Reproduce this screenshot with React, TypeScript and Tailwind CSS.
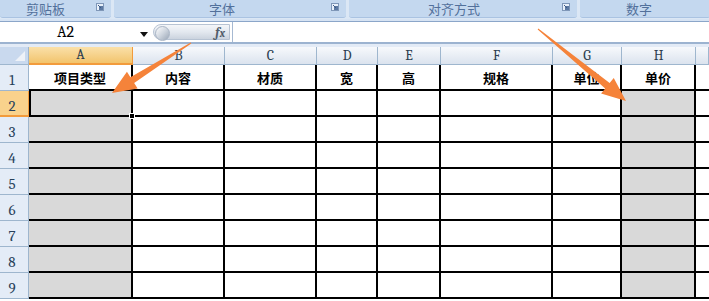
import React from "react";

const cols = [
  { key: "A", w: 104, title: "项目类型", gray: true },
  { key: "B", w: 92, title: "内容" },
  { key: "C", w: 92, title: "材质" },
  { key: "D", w: 61, title: "宽" },
  { key: "E", w: 63, title: "高" },
  { key: "F", w: 112, title: "规格" },
  { key: "G", w: 69, title: "单位" },
  { key: "H", w: 74, title: "单价", gray: true },
  { key: "I", w: 13, title: "" },
];

const groups = [
  { label: "剪贴板", w: 111, pr: "pr-[20px]", launcher: true },
  { label: "字体", w: 232, pr: "pr-[16px]", launcher: true },
  { label: "对齐方式", w: 228, pr: "pr-[18px]", launcher: true },
  { label: "数字", w: 130, pr: "pr-[12px]", launcher: false },
];

function Launcher() {
  return (
    <svg width="8" height="8" viewBox="0 0 8 8" className="absolute right-[7px] top-[3px]">
      <rect x="0.5" y="0.5" width="7" height="7" fill="#e8f0fa" stroke="#7f97b8" />
      <rect x="3" y="3" width="4" height="4" fill="#5d7aa3" />
      <path d="M2 2 L5 5" stroke="#3d5a85" strokeWidth="1" />
    </svg>
  );
}

// tapered arrow from tail to tip
function Arrow({ x1, y1, x2, y2 }: { x1: number; y1: number; x2: number; y2: number }) {
  const dx = x2 - x1;
  const dy = y2 - y1;
  const len = Math.hypot(dx, dy);
  const ux = dx / len;
  const uy = dy / len;
  const nx = -uy;
  const ny = ux;
  const head = 24;
  const hw = 10;
  const bx = x2 - ux * head;
  const by = y2 - uy * head;
  const pts = [
    [x1 + nx * 0.5, y1 + ny * 0.5],
    [bx + nx * 3.5, by + ny * 3.5],
    [bx + nx * hw, by + ny * hw],
    [x2, y2],
    [bx - nx * hw, by - ny * hw],
    [bx - nx * 3.5, by - ny * 3.5],
    [x1 - nx * 0.5, y1 - ny * 0.5],
  ]
    .map((p) => p.join(","))
    .join(" ");
  return <polygon points={pts} fill="#f5833a" />;
}

export default function App() {
  const rows = [1, 2, 3, 4, 5, 6, 7, 8, 9];
  const template =
    "grid grid-cols-[29px_104px_92px_92px_61px_63px_112px_69px_74px_1fr]";

  return (
    <div className="relative w-[709px] h-[301px] overflow-hidden bg-white font-[Noto_Sans_CJK_SC]">
      {/* ribbon group labels */}
      <div className="flex h-[19px] gap-[3px] bg-[#dbe7f5]">
        {groups.map((g) => (
          <div
            key={g.label}
            style={{ width: g.w }}
            className={`relative shrink-0 flex items-center justify-center ${g.pr} h-[18px] bg-[#c4d8ef] rounded-b-[3px] border-b border-[#aac3e2] text-[13px] leading-none text-[#52709b]`}
          >
            {g.label}
            {g.launcher && <Launcher />}
          </div>
        ))}
      </div>
      <div className="h-[3px] bg-[#d6e3f3] border-b border-[#8ba6c9]" />

      {/* formula bar */}
      <div className="flex h-[22px] bg-white border-b-2 border-[#9cb3d0]">
        <div className="relative w-[153px] shrink-0 flex items-center justify-center pr-[22px] font-serif text-[16px] text-black">
          A2
          <svg width="8" height="5" viewBox="0 0 8 5" className="absolute left-[140px] top-[10px]">
            <path d="M0 0 H8 L4 5 Z" fill="#111" />
          </svg>
        </div>
        <div className="relative w-[77px] shrink-0 my-[2px] rounded-l-full bg-gradient-to-b from-[#f4f6f9] via-[#e3e8ef] to-[#cbd3de] border border-[#b7c3d3] flex items-center justify-end pr-[4px]">
          <div className="absolute left-[1px] top-[1px] w-[15px] h-[15px] rounded-full bg-gradient-to-br from-[#ffffff] via-[#cfd6df] to-[#9aa6b6] border border-[#a9b5c5]" />
          <span className="font-serif italic font-bold text-[13px] text-[#505c6a] leading-none">
            f<span className="text-[11px]">x</span>
          </span>
        </div>
        <div className="flex-1 ml-[2px] border-l border-[#a6b9d2]" />
      </div>
      <div className="h-[3px] bg-[#e3ebf6]" />

      {/* sheet */}
      <div className={template}>
        {/* header row */}
        <div className="h-[18px] bg-[#c9d9ee] border-r border-b border-[#9eb6ce] relative">
          <svg width="10" height="10" viewBox="0 0 10 10" className="absolute right-[3px] bottom-[3px]">
            <path d="M10 0 V10 H0 Z" fill="#eef2f8" />
          </svg>
        </div>
        {cols.map((c) => (
          <div
            key={c.key}
            className={
              c.key === "A"
                ? "h-[18px] flex items-end justify-center pb-[1px] bg-gradient-to-b from-[#fae0a8] to-[#f2c46c] border-r border-b-2 border-[#f29b3c] font-serif text-[14px] leading-none text-[#2b3d4f]"
                : "h-[18px] flex items-end justify-center pb-[1px] bg-gradient-to-b from-[#f7f9fc] to-[#dbe3ee] border-r border-b border-[#9eb6ce] font-serif text-[14px] leading-none text-[#2b3d4f]"
            }
          >
            {c.key === "I" ? "" : c.key}
          </div>
        ))}

        {rows.map((r) => (
          <React.Fragment key={r}>
            <div
              className={
                r === 2
                  ? "h-[26px] flex items-end justify-center pr-[4px] pb-[1px] bg-[#f9d28c] border-r border-b-2 border-[#f29b3c] font-serif text-[15px] leading-none text-[#27415a]"
                  : "h-[26px] flex items-end justify-center pr-[4px] pb-[2px] bg-[#e4ecf7] border-r border-b border-[#9eb6ce] font-serif text-[15px] leading-none text-[#27415a]"
              }
            >
              {r}
            </div>
            {cols.map((c) => {
              const gray = c.gray && r > 1;
              const selected = r === 2 && c.key === "A";
              return (
                <div
                  key={c.key}
                  className={
                    (selected
                      ? "relative bg-[#d9d9d9] border-2 border-black -mt-[2px] h-[28px] "
                      : c.key === "I"
                      ? "h-[26px] border-b-2 border-black "
                      : `h-[26px] border-r-2 border-b-2 border-black ${gray ? "bg-[#d9d9d9]" : "bg-white"} `) +
                    "flex items-center justify-center text-[13px] font-bold text-black leading-none"
                  }
                >
                  {r === 1 ? c.title : ""}
                  {selected && (
                    <div className="absolute -right-[4px] -bottom-[4px] w-[6px] h-[6px] bg-black border border-white" />
                  )}
                </div>
              );
            })}
          </React.Fragment>
        ))}
      </div>

      {/* annotation arrows */}
      <svg className="absolute left-0 top-0 pointer-events-none" width="709" height="301">
        <Arrow x1={191} y1={43} x2={112} y2={93} />
        <Arrow x1={538} y1={29} x2={626} y2={101} />
      </svg>
    </div>
  );
}
